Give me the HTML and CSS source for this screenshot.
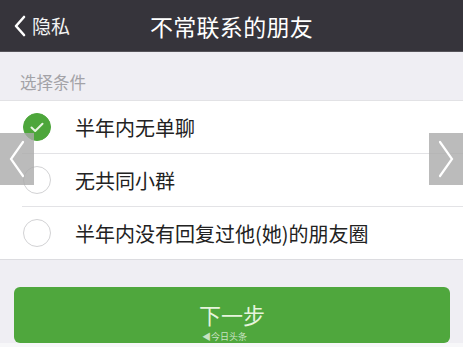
FILE: index.html
```html
<!DOCTYPE html>
<html lang="zh">
<head>
<meta charset="utf-8">
<link rel="stylesheet" href="styles.css">
</head>
<body>
<div class="page">
  <header class="nav">
    <div class="back">
      <svg class="back-icon" width="14" height="22" viewBox="0 0 14 22"><path d="M11 2 L3 11 L11 20" fill="none" stroke="#fff" stroke-width="2.6" stroke-linecap="round" stroke-linejoin="round"/></svg>
      <span>隐私</span>
    </div>
    <div class="title">不常联系的朋友</div>
  </header>
  <div class="section-label">选择条件</div>
  <ul class="list">
    <li class="row">
      <span class="radio checked"><svg width="14" height="11" viewBox="0 0 14 11"><path d="M1.5 5.5 L5.2 9 L12.5 1.8" fill="none" stroke="#e9f6e3" stroke-width="2" stroke-linecap="round" stroke-linejoin="round"/></svg></span>
      <span class="label">半年内无单聊</span>
    </li>
    <li class="row">
      <span class="radio"></span>
      <span class="label">无共同小群</span>
    </li>
    <li class="row">
      <span class="radio"></span>
      <span class="label">半年内没有回复过他(她)的朋友圈</span>
    </li>
  </ul>
  <div class="btn-wrap">
    <div class="btn"><span class="btn-text">下一步</span><span class="mark">◀今日头条</span></div>
  </div>
  <div class="arrow left"><svg width="20" height="40" viewBox="0 0 20 40"><path d="M16 3 L4 20 L16 37" fill="none" stroke="#fff" stroke-width="2.2" stroke-linecap="round"/></svg></div>
  <div class="arrow right"><svg width="20" height="40" viewBox="0 0 20 40"><path d="M4 3 L16 20 L4 37" fill="none" stroke="#fff" stroke-width="2.2" stroke-linecap="round"/></svg></div>
</div>
</body>
</html>
```
FILE: styles.css
```css
html, body {
  margin: 0;
  padding: 0;
  width: 463px;
  height: 347px;
  overflow: hidden;
  background: #f7f7f9;
  font-family: "Noto Sans CJK SC", "Noto Sans", sans-serif;
}
.page {
  position: relative;
  width: 463px;
  height: 343px;
  background: #efeef3;
}
.nav {
  height: 51px;
  background: #36343b;
  border-bottom: 1px solid #56545a;
  display: flex;
  align-items: center;
  position: relative;
  color: #fff;
}
.back {
  display: flex;
  align-items: center;
  gap: 5px;
  padding-left: 13px;
  font-size: 19px;
  color: #f2f2f2;
}
.back-icon { display: block; }
.title {
  position: absolute;
  left: 0;
  right: 0;
  text-align: center;
  font-size: 23px;
  letter-spacing: 0.3px;
  color: #fff;
}
.section-label {
  height: 48px;
  box-sizing: border-box;
  padding: 19px 0 0 20px;
  font-size: 16.5px;
  line-height: 22px;
  color: #a3a2a7;
}
.list {
  list-style: none;
  margin: 0;
  padding: 0;
  background: #fff;
  border-top: 1px solid #e2e2e5;
  border-bottom: 1px solid #dcdce0;
}
.row {
  height: 52px;
  display: flex;
  align-items: center;
  margin-left: 22px;
  border-bottom: 1px solid #e3e3e6;
}
.row:last-child { border-bottom: none; height: 52px; }
.radio {
  width: 28px;
  height: 28px;
  margin-left: 1px;
  box-sizing: border-box;
  border: 1.5px solid #d2d2d4;
  border-radius: 50%;
  display: flex;
  align-items: center;
  justify-content: center;
  flex: none;
}
.radio.checked {
  background: #4da63b;
  border-color: #4da63b;
}
.label {
  margin-left: 24px;
  font-size: 20px;
  color: #222;
}
.btn-wrap {
  padding: 27px 13px 0 14px;
}
.btn {
  height: 56px;
  border-radius: 6px;
  background: #4fa73d;
  color: #e6f4dc;
  display: flex;
  justify-content: center;
  padding-top: 15px;
  box-sizing: border-box;
  position: relative;
  overflow: hidden;
}
.btn-text {
  font-size: 22px;
  line-height: 24px;
  height: 24px;
}
.mark {
  position: absolute;
  left: 188px;
  top: 45px;
  font-size: 9px;
  line-height: 10px;
  color: rgba(255,255,255,0.7);
}
.arrow {
  position: absolute;
  top: 133px;
  width: 34px;
  height: 52px;
  background: rgba(170,170,170,0.8);
  display: flex;
  align-items: center;
  justify-content: center;
}
.arrow.left { left: 0; }
.arrow.right { right: 0; }
```
